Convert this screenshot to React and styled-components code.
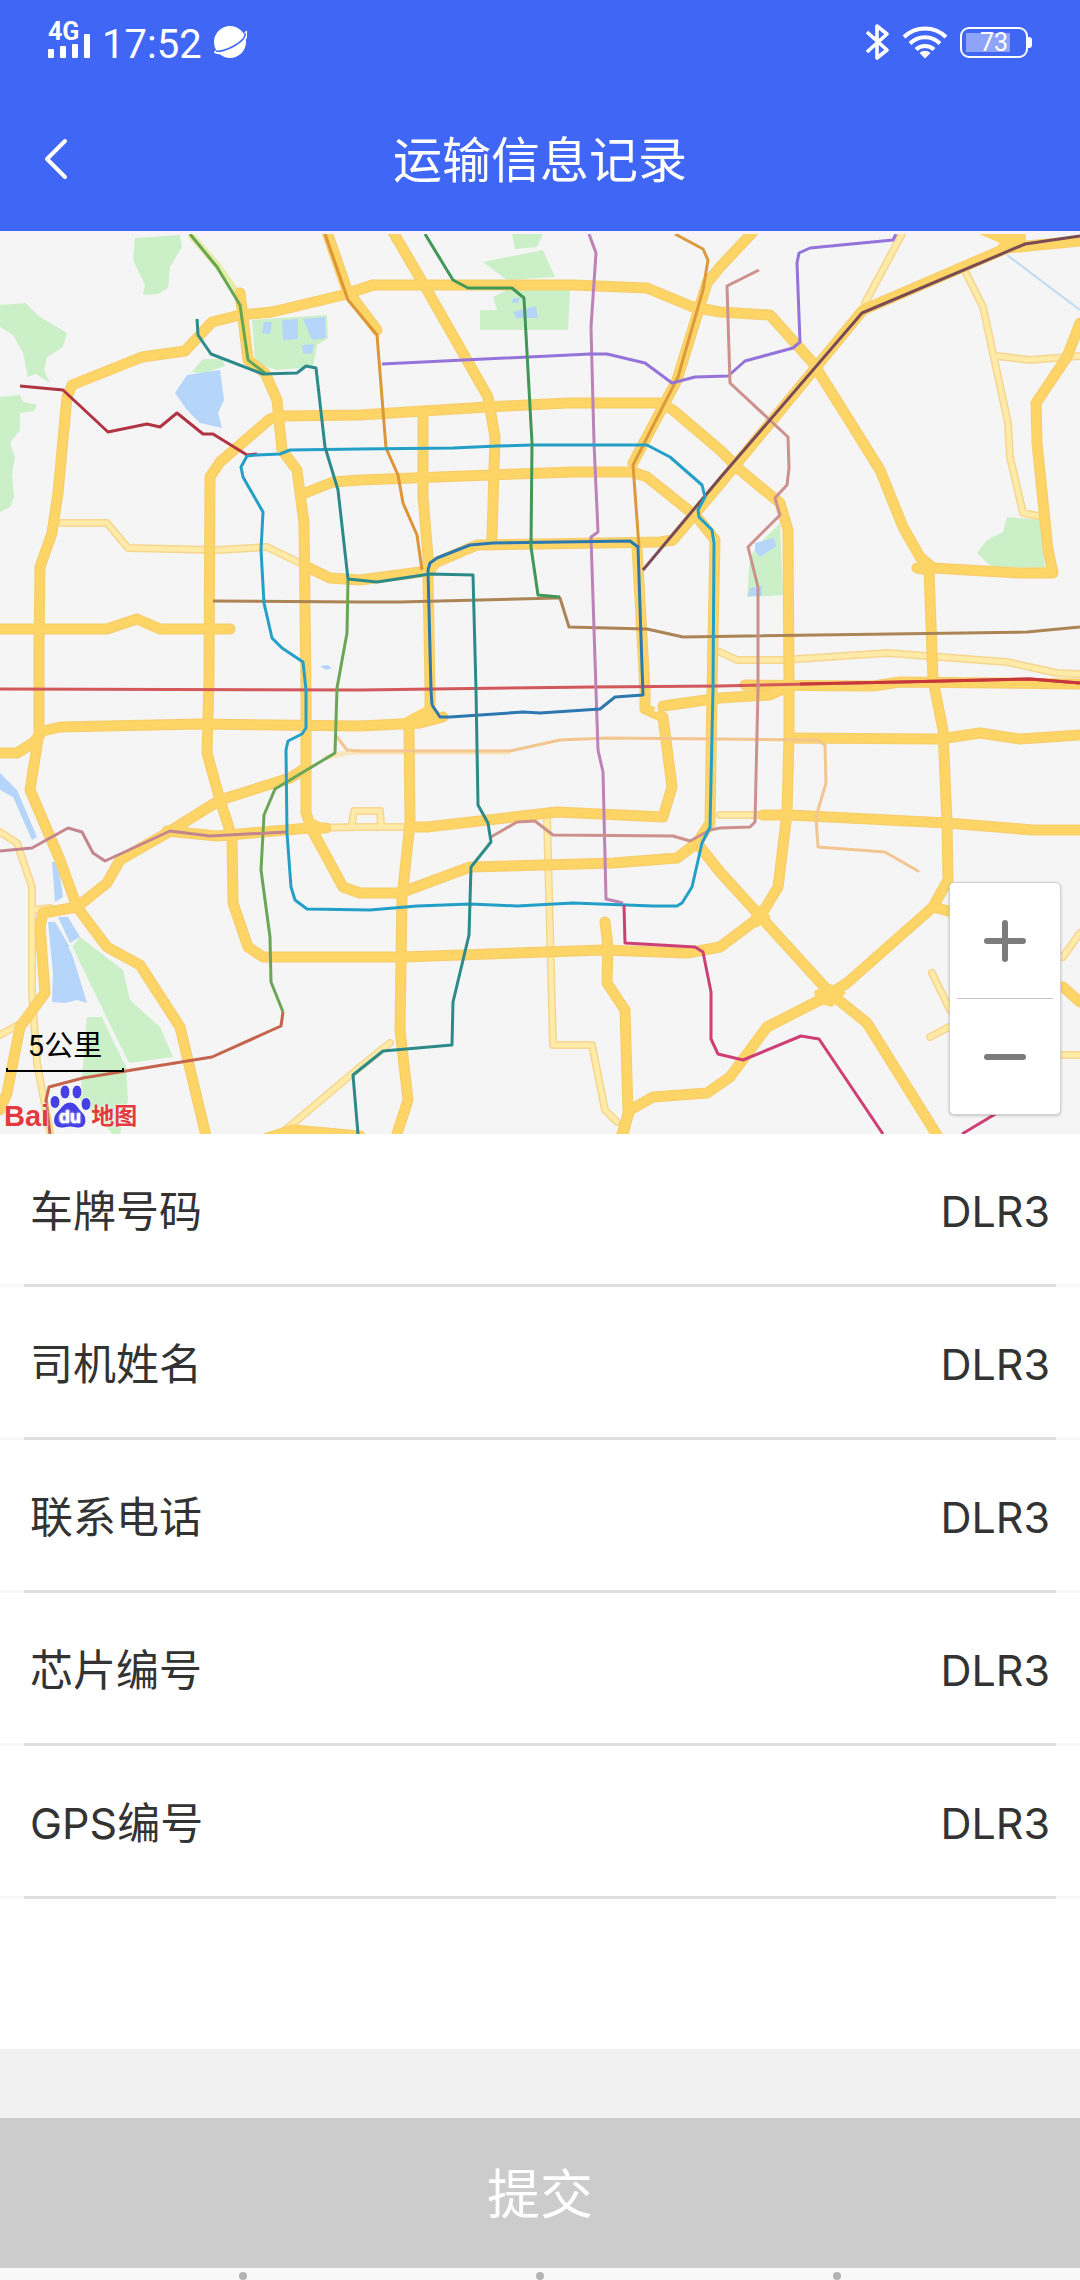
import React from 'react';
import styled, { createGlobalStyle } from 'styled-components';

const GlobalStyle = createGlobalStyle`
  * { box-sizing: border-box; }
  body {
    margin: 0;
    background: #f1f1f1;
    color: #333;
    font-family: Roboto, "Noto Sans CJK SC", sans-serif;
  }
  button { font-family: inherit; }
`;

const Screen = styled.div`
  display: flex;
  flex-direction: column;
  width: 100%;
`;

/* ---------- header ---------- */

const Header = styled.header`
  display: flex;
  flex-direction: column;
  padding-bottom: 3px;
  background: #4066f6;
  color: #fff;
`;

const StatusBar = styled.div`
  display: flex;
  align-items: center;
  justify-content: space-between;
  height: 84px;
  padding: 0 48px;
`;

const StatusGroup = styled.div`
  display: flex;
  align-items: center;
  gap: ${(p) => p.$gap}px;
`;

const Clock = styled.time`
  padding-top: 6px;
  font-size: 40px;
  line-height: 44px;
`;

const Signal = styled.div`
  display: flex;
  flex-direction: column;
  width: 42px;
  padding: 2px 0 6px;
`;

const SignalType = styled.span`
  height: 11px;
  font-size: 25px;
  font-weight: 700;
  line-height: 20px;
`;

const SignalBars = styled.svg`
  display: block;
  width: 42px;
  height: 25px;
`;

const Battery = styled.div`
  display: flex;
  align-items: center;
`;

const BatteryBody = styled.div`
  display: flex;
  align-items: center;
  justify-content: center;
  width: 68px;
  height: 31px;
  border: 2px solid #fff;
  border-radius: 9px;
  background: linear-gradient(#8ea4fb, #8ea4fb) 4px 4px / 44px 19px no-repeat;
  font-size: 25px;
  line-height: 27px;
`;

const BatteryNub = styled.div`
  width: 4px;
  height: 11px;
  border-radius: 0 3px 3px 0;
  background: #fff;
`;

const NavBar = styled.div`
  display: grid;
  grid-template-columns: 112px 1fr 112px;
  align-items: center;
  height: 144px;
  padding-top: 6px;
`;

const BackButton = styled.button`
  display: flex;
  align-items: center;
  height: 80px;
  padding: 0 0 0 44px;
  border: 0;
  background: none;
  color: inherit;
`;

const Title = styled.h1`
  margin: 0;
  padding-top: 6px;
  font-size: 49px;
  font-weight: 400;
  line-height: 72px;
  text-align: center;
`;

/* ---------- map ---------- */

const MapPanel = styled.section`
  position: relative;
  border-top: 3px solid #f8f2fb;
  background: #f5f5f5;
`;

const MapDrawing = styled.svg`
  display: block;
  width: 100%;
  height: auto;
`;

const ScaleBar = styled.div`
  position: absolute;
  left: 6px;
  bottom: 62px;
  width: 118px;
  height: 43px;
  border: 2px solid #000;
  border-top: 0;
  border-image: linear-gradient(transparent 39px, #000 39px) 2;
  color: #000;
  font-size: 29px;
  line-height: 34px;
  text-align: center;
`;

const MapLogo = styled.div`
  position: absolute;
  left: 4px;
  bottom: 5px;
  display: flex;
  align-items: flex-end;
  color: #e23a3f;
  font-weight: 700;
  text-shadow: 0 0 2px #fff, 0 0 2px #fff;
`;

const LogoLatin = styled.span`
  font-family: "Liberation Sans", sans-serif;
  font-size: 29px;
  line-height: 26px;
`;

const LogoHan = styled.span`
  font-size: 23px;
  line-height: 24px;
`;

const LogoPaw = styled.svg`
  display: block;
  width: 42px;
  height: 45px;
`;

const ZoomControl = styled.div`
  position: absolute;
  right: 19px;
  bottom: 19px;
  display: flex;
  flex-direction: column;
  width: 112px;
  border: 1px solid #d0d0d0;
  border-radius: 5px;
  background: #fff;
  box-shadow: 0 1px 3px rgba(0, 0, 0, 0.2);
`;

const ZoomButton = styled.button`
  display: flex;
  align-items: center;
  justify-content: center;
  height: 115px;
  padding: 0;
  border: 0;
  background: none;
  color: #7c7c7c;
`;

const ZoomRule = styled.div`
  height: 1px;
  margin: 0 7px;
  background: #c4c4c4;
`;

/* ---------- details ---------- */

const Details = styled.dl`
  margin: 0;
  padding-bottom: 150px;
  background: #fff;
  font-family: Inter, "Noto Sans CJK SC", sans-serif;
  font-size: 43px;
  font-weight: 400;
  line-height: 64px;
`;

const DetailRow = styled.div`
  display: flex;
  align-items: center;
  justify-content: space-between;
  height: 153px;
  padding: 4px 30px 0;
  border-bottom: 3px solid #dfdfdf;
  border-image: linear-gradient(
    to right,
    #f8f8f8 24px,
    #dfdfdf 24px,
    #dfdfdf calc(100% - 24px),
    #f8f8f8 calc(100% - 24px)
  ) 0 0 3 0;
`;

const DetailLabel = styled.dt`
  margin: 0;
`;

const DetailValue = styled.dd`
  margin: 0;
`;

/* ---------- footer ---------- */

const SubmitButton = styled.button`
  height: 150px;
  margin-top: 69px;
  padding: 6px 0 0;
  border: 0;
  background: #ccc;
  color: #fff;
  font-size: 53px;
  line-height: 80px;
`;

const SystemBar = styled.div`
  display: grid;
  grid-template-columns: repeat(3, 1fr);
  justify-items: center;
  align-items: end;
  height: 12px;
  padding: 0 94px;
  background: #f8f8f8;
`;

const SystemDot = styled.span`
  width: 8px;
  height: 8px;
  border-radius: 50%;
  background: #b3b3b3;
`;

/* ---------- map data ---------- */

const parks = [
  '135,238 180,235 182,247 170,267 168,288 158,294 143,295 145,285 133,260',
  '0,305 25,303 40,317 67,333 63,347 47,357 44,370 50,383 36,374 28,377 23,353 13,335 0,327',
  '0,397 20,395 23,402 37,405 34,411 20,413 20,430 10,443 15,457 12,475 14,497 10,507 0,512',
  '192,372 203,359 222,359 225,366 205,373',
  '252,320 327,315 328,338 317,345 313,367 277,370 255,363',
  '512,234 543,234 537,247 515,249',
  '483,262 543,250 555,277 507,280',
  '480,310 497,310 493,297 507,290 570,290 568,330 480,330',
  '780,523 783,595 747,597 750,557 758,545',
  '1007,517 1040,520 1045,568 992,567 977,553 987,540 1003,532',
  '80,937 123,970 130,1000 160,1027 173,1057 129,1063 72,947',
  '87,1017 103,1017 126,1066 128,1100 120,1134 113,1134 80,1100',
];

const waters = [
  '175,393 187,375 220,370 224,400 218,413 222,428 200,423 187,410',
  '282,320 298,319 298,339 283,340',
  '303,319 325,317 326,338 312,340',
  '302,345 314,344 312,354 303,353',
  '264,322 272,322 270,334 262,333',
  '513,298 520,298 518,303 512,303',
  '513,312 536,306 538,318 516,318',
  '755,543 774,538 776,546 760,557 755,551',
  '750,588 762,586 762,596 748,596',
  '0,773 17,790 37,837 32,840 13,797 0,790',
  '52,862 58,862 63,897 55,902',
  '58,917 68,917 80,937 70,943',
  '48,922 55,922 70,947 87,1003 77,1000 65,1003 52,1002 53,973',
  '320,666 328,665 332,668 326,670',
];

const lightRoads = [
  '62,523 107,523 128,548 217,550 267,547 300,563',
  '310,828 360,827 403,827',
  '352,824 354,811 380,811 381,825',
  '720,815 763,815',
  '547,817 553,1045 592,1045 605,1110 617,1122',
  '902,234 865,303',
  '965,271 983,307 1008,423 1010,457 1023,513 1038,516',
  '997,356 1030,360 1080,356',
  '720,652 737,660 783,660 887,653 1007,662 1057,673 1080,674',
  '0,832 17,843 32,887 32,993 37,1063 50,1132',
  '0,1035 20,1024',
  '34,910 50,908',
  '283,1132 360,1067 390,1043',
  '932,973 950,1010',
  '930,1037 953,1025',
  '1063,957 1080,933',
  '1063,1055 1080,1055',
];

const mainRoads = [
  '39,690 39,647 40,567 52,533 58,493 67,397 72,385 142,357 185,351 212,322 240,315 272,312 343,295 373,285 573,285 647,288 693,307 720,312 770,315 813,363 847,417 880,470 903,527 920,557 933,568 1020,573 1053,573 1048,550 1037,443 1036,403 1067,357 1080,323',
  '39,690 39,733 30,790 60,860 77,907 107,947 140,965 180,1027 207,1140',
  '0,753 17,753 33,743 43,731 60,727 200,724 360,726 420,723 443,717',
  '77,907 43,913 40,927 45,993 20,1027 7,1093 0,1110',
  '77,907 107,883 120,860 167,833 220,800 290,778 306,768',
  '167,831 217,836 310,828 326,828',
  '0,629 107,629 137,619 160,629 230,629',
  '360,957 263,957 248,947 233,903 232,837 220,800 207,753 209,680 210,477 220,462 270,419 280,416 360,415 487,407 567,403 660,403 673,410 720,450 740,470 780,503 788,530 789,683 789,737 787,813 778,887 760,917 720,947 687,953 603,950 403,957 360,957',
  '240,293 248,360 265,373 277,400 282,450 297,470 304,523 306,690 306,813 312,830 343,887 360,893 400,893 470,867 613,863 677,858 697,843 710,823 712,690 715,540 697,517 647,477 633,472 573,472 490,475 360,480 333,482 305,493',
  '430,712 430,690 428,573 435,563 477,545 660,542 673,540',
  '637,547 645,690 645,709 663,717 672,787 663,817 557,812 427,827 410,827',
  '409,727 410,823 402,897 400,1030 408,1100 395,1140',
  '423,413 423,497 428,557 428,573',
  '393,232 427,290 488,397 495,437 492,537',
  '327,232 347,290 377,330',
  '345,294 373,285',
  '753,232 720,267 707,283 677,380 633,463',
  '307,567 330,578 360,580 420,572',
  '917,568 929,570 933,680 943,730 947,823 948,880 933,907 847,983 820,1000 767,1027 730,1077 707,1093 653,1097 630,1110 620,1140',
  '697,843 720,872 830,993 867,1023 907,1087 940,1140',
  '790,738 940,739 980,733 1020,739 1080,735',
  '763,815 790,815 947,823 1033,830 1080,830',
  '663,706 720,698 770,695 787,687',
  '745,685 873,686 900,682 1080,684',
  '605,922 608,947 607,983 625,1010 628,1113 622,1140',
  '673,540 720,484 863,310 1007,248 1080,241',
  '933,907 952,912',
  '267,1138 293,1130 360,1136',
  '1063,987 1080,1002',
];

const thinRoads = [
  '337,737 347,750 360,751 510,751 560,740 607,738 720,739 817,740 825,745 826,783 816,817 818,847 885,852 918,871',
];

const metroLines = [
  { color: '#d2585c', points: '0,689 360,690 593,687 720,686 900,682 1030,679 1080,683' },
  { color: '#c8383a', points: '800,684 900,682 1030,679 1080,683' },
  { color: '#ac8556', points: '213,601 360,602 400,602 557,598 560,598 569,627 647,629 683,637 1027,632 1080,627' },
  { color: '#b13442', points: '20,386 63,390 108,432 147,424 160,427 177,413 203,434 213,434 247,455 257,454' },
  { color: '#66a650', points: '190,234 217,267 240,305 248,360 265,373' },
  { color: '#6aa656', points: '348,580 347,633 337,688 335,753 275,789 264,815 261,870 270,937 271,982 283,1012' },
  { color: '#c4644c', points: '283,1012 281,1026 212,1057 83,1078 49,1087 46,1100 50,1134' },
  { color: '#dd9536', points: '325,234 348,300 377,335 386,448 398,475 403,503 417,535 422,570' },
  { color: '#dd9a3c', points: '675,234 703,249 708,260 703,290 678,377 633,465 639,547' },
  { color: '#bd82b6', points: '589,234 596,253 591,327 594,443 598,532 591,537 596,690 598,750 603,772 606,899 623,903' },
  { color: '#9473da', points: '382,364 590,354 607,354 645,363 672,383 695,377 728,376 745,361 793,348 800,342 797,263 799,253 810,248 893,240 896,234' },
  { color: '#cd918d', points: '759,270 727,286 730,383 788,437 789,468 787,485 775,498 780,515 748,547 758,587 758,690 755,822 750,827 720,828 710,830 690,841 673,836 553,835 535,821 517,822 491,837' },
  { color: '#c4868e', points: '0,851 32,848 68,828 82,832 93,853 105,861 170,831 210,836 287,832' },
  { color: '#7a4a55', points: '643,570 720,478 862,313 1025,244 1080,236' },
  { color: '#24a0c8', points: '257,455 280,454 290,450 360,449 453,448 497,446 533,445 647,445 670,457 702,485 705,497 698,510 699,517 712,530 714,543 713,690 710,827 702,843 692,887 682,903 677,906 653,906 573,903 517,906 470,904 417,906 370,910 307,909 295,900 291,887 287,833 286,750 288,741 302,734 306,728 306,690 303,662 282,648 272,638 264,603 261,550 263,512 243,477 241,467 247,456 257,455' },
  { color: '#2d78b0', points: '432,705 431,690 428,570 430,563 437,558 470,545 493,543 630,541 638,547 642,667 643,695 615,697 600,709 540,713 523,712 450,717 440,717 432,705' },
  { color: '#2c8b8a', points: '197,319 198,335 211,354 263,374 297,373 306,366 316,368 325,447 338,490 348,579 377,582 430,574 473,575 476,690 478,805 488,823 491,842 471,867 469,935 453,1002 452,1045 383,1051 353,1075 358,1134' },
  { color: '#409758', points: '425,234 453,280 468,288 512,288 524,298 532,443 531,547 538,595 560,597' },
  { color: '#ce3f76', points: '624,905 625,943 695,947 703,952 711,992 711,1039 718,1054 743,1060 801,1036 819,1039 883,1134' },
  { color: '#ce3f76', points: '962,1134 997,1113' },
];

const details = [
  { label: '车牌号码', value: 'DLR3' },
  { label: '司机姓名', value: 'DLR3' },
  { label: '联系电话', value: 'DLR3' },
  { label: '芯片编号', value: 'DLR3' },
  { label: 'GPS编号', value: 'DLR3' },
];

function Polylines({ items, color, width }) {
  return (
    <g fill="none" stroke={color} strokeWidth={width} strokeLinejoin="round" strokeLinecap="round">
      {items.map((points) => (
        <polyline key={points} points={points} />
      ))}
    </g>
  );
}

function CityMap() {
  return (
    <MapDrawing viewBox="0 234 1080 900" aria-hidden="true">
      <g fill="#cbf0c8">
        {parks.map((points) => <polygon key={points} points={points} />)}
      </g>
      <g fill="#b5d5fa">
        {waters.map((points) => <polygon key={points} points={points} />)}
      </g>
      <line x1="1007" y1="255" x2="1080" y2="310" stroke="#bfdaf3" strokeWidth="2" />
      <path d="M70 946L126 1063" stroke="#f3f5f2" strokeWidth="4" />
      <Polylines items={lightRoads} color="#f5d690" width={8} />
      <Polylines items={lightRoads} color="#ffeaa8" width={5} />
      <polyline points="325,758 345,753 360,752 510,752" fill="none" stroke="#fbe6bb" strokeWidth="5" />
      <polyline points="190,234 217,265 242,300" fill="none" stroke="#e5edaa" strokeWidth="7" />
      <Polylines items={mainRoads} color="#f6cc6c" width={11} />
      <Polylines items={mainRoads} color="#fdd466" width={9} />
      <polygon fill="#fdd466" points="979,234 1026,234 1026,252 990,254 1000,243" />
      <g fill="#fdd466">
        <polygon points="298,828 312,818 331,828 314,838" />
        <polygon points="402,719 430,704 447,718 412,730" />
        <polygon points="392,957 402,948 416,957 402,966" />
        <polygon points="750,917 760,905 771,917 757,928" />
        <polygon points="814,991 831,984 846,993 832,1007 816,1003" />
      </g>
      <circle cx="656" cy="710" r="2" fill="#f5f5f5" />
      <Polylines items={thinRoads} color="#f3c690" width={3} />
      <g fill="none" strokeWidth="3" strokeLinejoin="round">
        {metroLines.map((line) => (
          <polyline key={line.points} points={line.points} stroke={line.color} />
        ))}
      </g>
    </MapDrawing>
  );
}

function Planet() {
  return (
    <svg width="33" height="34" viewBox="0 0 33 34" aria-hidden="true">
      <circle cx="16" cy="17" r="16" fill="#fff" />
      <path d="M31 7c3 3-2 9-10 14S4 29 1 26" fill="none" stroke="#fff" strokeWidth="4" />
      <path d="M31 8c1 4-4 9-11 13S5 27 2 26" fill="none" stroke="#4066f6" strokeWidth="1.6" />
    </svg>
  );
}

function Bluetooth() {
  return (
    <svg width="24" height="36" viewBox="0 0 24 36" aria-hidden="true">
      <path d="M1 8l20 18-10 8V2l10 8L1 28" fill="none" stroke="#fff" strokeWidth="3.6" strokeLinejoin="round" />
    </svg>
  );
}

function Wifi() {
  return (
    <svg width="46" height="34" viewBox="0 0 46 34" aria-hidden="true">
      <g fill="none" stroke="#fff" strokeWidth="4">
        <path d="M2 12a30 30 0 0 1 42 0" />
        <path d="M8 18.500a21 21 0 0 1 30 0" />
        <path d="M14 24.500a13 13 0 0 1 18 0" />
      </g>
      <path d="M17.500 28a8 8 0 0 1 11 0L23 33.500z" fill="#fff" />
    </svg>
  );
}

function Paw() {
  return (
    <LogoPaw viewBox="0 0 42 45" aria-hidden="true">
      <g fill="#4440e4" stroke="#fff" strokeWidth="1">
        <ellipse cx="6" cy="18" rx="5" ry="6.500" />
        <ellipse cx="16" cy="8" rx="5" ry="7" />
        <ellipse cx="28" cy="8" rx="5" ry="7" />
        <ellipse cx="37" cy="20" rx="5" ry="6.500" />
        <path d="M21 18c6 0 8 6 12 10 6 5 5 15-2 16-4 .500-7-1-10-1s-6 1.500-10 1C3 43 3 33 8 28c4-4 7-10 13-10z" />
      </g>
      <text x="21" y="39" fill="#fff" fontFamily="Liberation Sans, sans-serif" fontSize="18" fontWeight="700" textAnchor="middle">du</text>
    </LogoPaw>
  );
}

export default function App() {
  return (
    <Screen>
      <GlobalStyle />
      <Header>
        <StatusBar>
          <StatusGroup $gap={12}>
            <Signal>
              <SignalType>4G</SignalType>
              <SignalBars viewBox="0 0 42 25" aria-hidden="true">
                <g fill="#fff">
                  <rect x="0" y="16" width="6" height="9" rx="1" />
                  <rect x="12" y="13" width="6" height="12" rx="1" />
                  <rect x="24" y="11" width="6" height="14" rx="1" />
                  <rect x="36" y="1" width="6" height="24" rx="1" />
                </g>
              </SignalBars>
            </Signal>
            <Clock>17:52</Clock>
            <Planet />
          </StatusGroup>
          <StatusGroup $gap={12}>
            <Bluetooth />
            <Wifi />
            <Battery>
              <BatteryBody>73</BatteryBody>
              <BatteryNub />
            </Battery>
          </StatusGroup>
        </StatusBar>
        <NavBar>
          <BackButton type="button" aria-label="返回">
            <svg width="24" height="42" viewBox="0 0 24 42" aria-hidden="true">
              <path d="M21 3L3 21l18 18" fill="none" stroke="#fff" strokeWidth="4" strokeLinecap="round" strokeLinejoin="round" />
            </svg>
          </BackButton>
          <Title>运输信息记录</Title>
        </NavBar>
      </Header>

      <MapPanel>
        <CityMap />
        <ScaleBar>5公里</ScaleBar>
        <MapLogo>
          <LogoLatin>Bai</LogoLatin>
          <Paw />
          <LogoHan>地图</LogoHan>
        </MapLogo>
        <ZoomControl>
          <ZoomButton type="button" aria-label="放大">
            <svg width="42" height="42" viewBox="0 0 42 42" aria-hidden="true">
              <path d="M3 21h36M21 3v36" stroke="currentColor" strokeWidth="6" strokeLinecap="round" />
            </svg>
          </ZoomButton>
          <ZoomRule />
          <ZoomButton type="button" aria-label="缩小">
            <svg width="42" height="42" viewBox="0 0 42 42" aria-hidden="true">
              <path d="M3 21h36" stroke="currentColor" strokeWidth="6" strokeLinecap="round" />
            </svg>
          </ZoomButton>
        </ZoomControl>
      </MapPanel>

      <Details>
        {details.map((item) => (
          <DetailRow key={item.label}>
            <DetailLabel>{item.label}</DetailLabel>
            <DetailValue>{item.value}</DetailValue>
          </DetailRow>
        ))}
      </Details>

      <SubmitButton type="submit" disabled>提交</SubmitButton>

      <SystemBar>
        <SystemDot />
        <SystemDot />
        <SystemDot />
      </SystemBar>
    </Screen>
  );
}
